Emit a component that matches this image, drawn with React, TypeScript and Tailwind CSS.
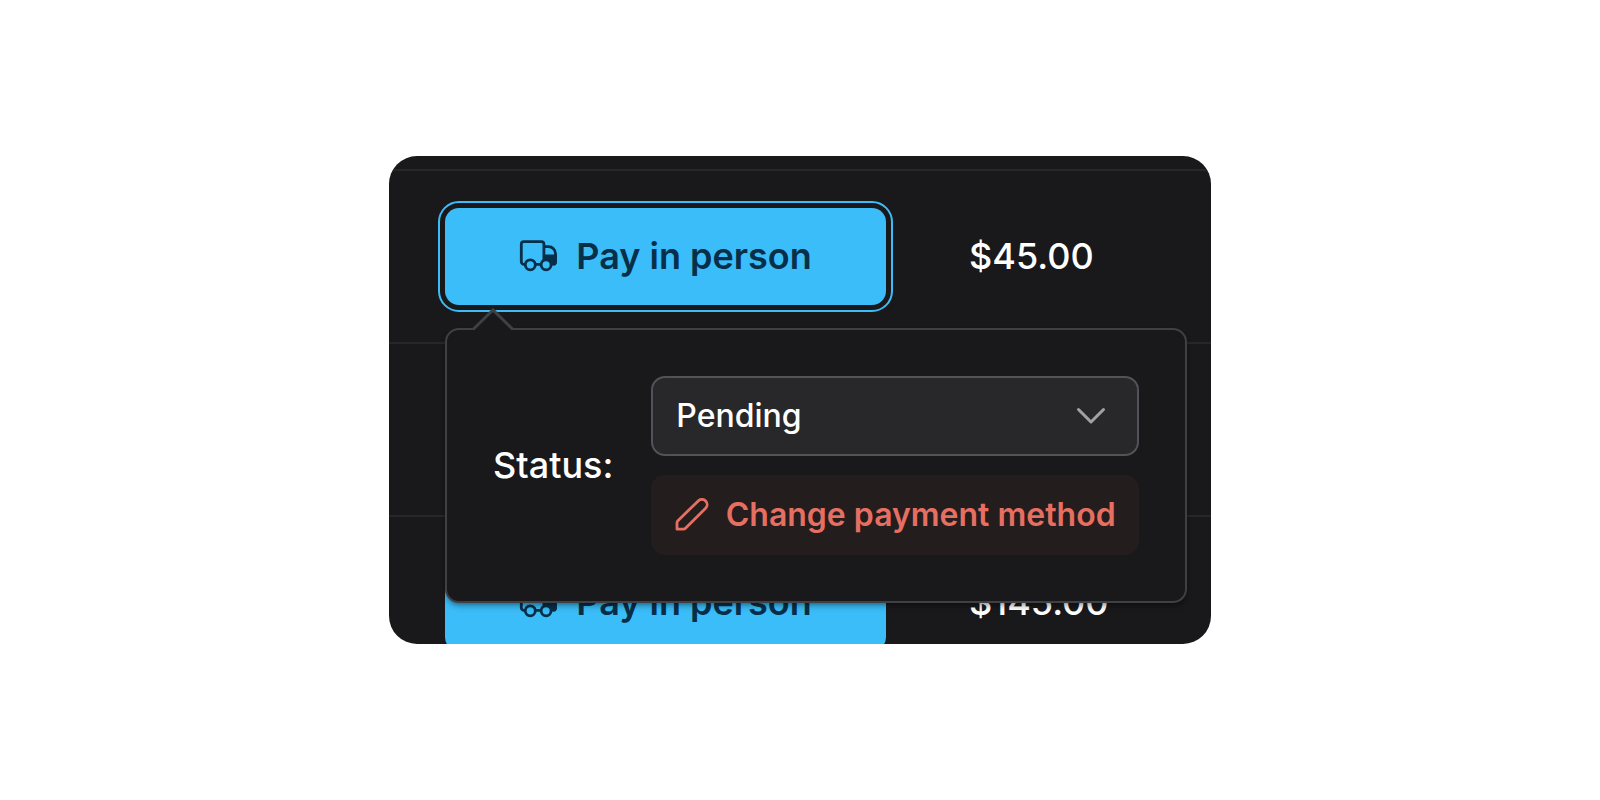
import { useState } from 'react'
import { clsx } from 'clsx'

interface Order {
  id: number
  method?: string
  total?: string
  active?: boolean
}

const orders: Order[] = [
  { id: 1, method: 'Pay in person', total: '$45.00', active: true },
  { id: 2 },
  { id: 3, method: 'Pay in person', total: '$145.00' },
]

const statuses = ['Pending', 'Paid', 'Refunded']

function TruckIcon() {
  return (
    <svg viewBox="0 0 38 38" className="size-[38px] shrink-0" fill="none" stroke="currentColor" strokeWidth="2.8" aria-hidden>
      <path d="M6.5 27.4H5a2.7 2.7 0 0 1-2.7-2.7V7.3A2.6 2.6 0 0 1 4.9 4.7h17.4a2.6 2.6 0 0 1 2.6 2.6v18M17 27.4h5" />
      <path d="M25 9.7h4.5a7 7 0 0 1 7 7v8a2.4 2.4 0 0 1-2.4 2.4" />
      <path d="M24 17.6h13.9v7.3a3.6 3.6 0 0 1-3.6 3.6H24z" fill="currentColor" stroke="none" />
      <circle cx="11.3" cy="27.8" r="5" className="fill-[#3abdf8]" />
      <circle cx="27.1" cy="27.8" r="5" className="fill-[#3abdf8]" />
    </svg>
  )
}

function PencilIcon() {
  return (
    <svg viewBox="0 0 34 34" className="size-[34px] shrink-0" fill="none" stroke="currentColor" strokeWidth="2.8" strokeLinejoin="round" aria-hidden>
      <path d="M2 31.2v-6.4a3 3 0 0 1 .9-2.1L23.2 2.9a5.2 5.2 0 0 1 7.4 7.4L10.5 30.3a3 3 0 0 1-2.1.9z" />
    </svg>
  )
}

function PayButton({ label, active }: { label: string; active?: boolean }) {
  return (
    <button
      type="button"
      aria-expanded={!!active}
      className={clsx(
        'flex h-[97px] w-full items-center justify-center gap-[19px] rounded-[14px] bg-[#3abdf8] pb-0.5 text-[36px] leading-[48px] font-semibold whitespace-nowrap text-[#082f49]',
        active ? 'outline-2 outline-offset-[5px] outline-[#3abdf8]' : 'outline-none',
      )}
    >
      <TruckIcon />
      {label}
    </button>
  )
}

function StatusPopover() {
  const [status, setStatus] = useState(statuses[0])

  return (
    <div className="absolute top-[172px] right-6 left-14 flex items-center gap-[38px] rounded-[14px] border-2 border-[#3f3f46] bg-[#19191b] p-[46px] shadow-md shadow-black/30">
      <svg viewBox="0 0 44 24" className="absolute -top-[22px] left-[24px] h-6 w-11" aria-hidden>
        <path d="M1 24 22 3l21 21z" className="fill-[#19191b]" />
        <path d="M2 21.5 22 2l20 19.5" fill="none" strokeWidth="3" className="stroke-[#3f3f46]" />
      </svg>

      <label htmlFor="status" className="pb-0.5 text-[36px] leading-[48px] font-medium text-white">
        Status:
      </label>

      <div className="flex min-w-0 flex-1 flex-col gap-[19px]">
        <div className="relative">
          <select
            id="status"
            value={status}
            onChange={(e) => setStatus(e.target.value)}
            className="block h-20 w-full appearance-none rounded-[14px] border-2 border-[#52525b] bg-[#28282a] px-[23px] text-[32px] font-medium text-white"
          >
            {statuses.map((s) => (
              <option key={s}>{s}</option>
            ))}
          </select>
          <svg viewBox="0 0 30 18" className="pointer-events-none absolute top-[31px] right-[33px] h-[18px] w-[30px] stroke-[#a1a1a6]" fill="none" strokeWidth="3" strokeLinecap="round" strokeLinejoin="round" aria-hidden>
            <path d="m2.5 2.5 12.5 12.5 12.5-12.5" />
          </svg>
        </div>

        <button
          type="button"
          className="flex h-20 items-center justify-center gap-[17px] rounded-[14px] bg-[#231d1e] text-[32px] font-semibold whitespace-nowrap text-[#e76f61]"
        >
          <PencilIcon />
          Change payment method
        </button>
      </div>
    </div>
  )
}

export default function App() {
  return (
    <main className="flex min-h-screen items-center justify-center bg-white font-['Inter',sans-serif]">
      <section className="relative h-[488px] w-full max-w-[822px] overflow-hidden rounded-[28px] bg-[#19191b] pt-[13px]">
        <table className="w-full table-fixed border-separate border-spacing-0 text-left">
          <tbody>
            {orders.map((order) => (
              <tr key={order.id} className="h-[173px]">
                <td className="w-[497px] border-t-2 border-[#27272a] p-0 pl-14">
                  {order.method && <PayButton label={order.method} active={order.active} />}
                </td>
                <td className="border-t-2 border-[#27272a] p-0 pb-0.5 pl-[83px] text-[36px] leading-[48px] font-medium text-white">
                  {order.total}
                </td>
              </tr>
            ))}
          </tbody>
        </table>
        <StatusPopover />
      </section>
    </main>
  )
}
